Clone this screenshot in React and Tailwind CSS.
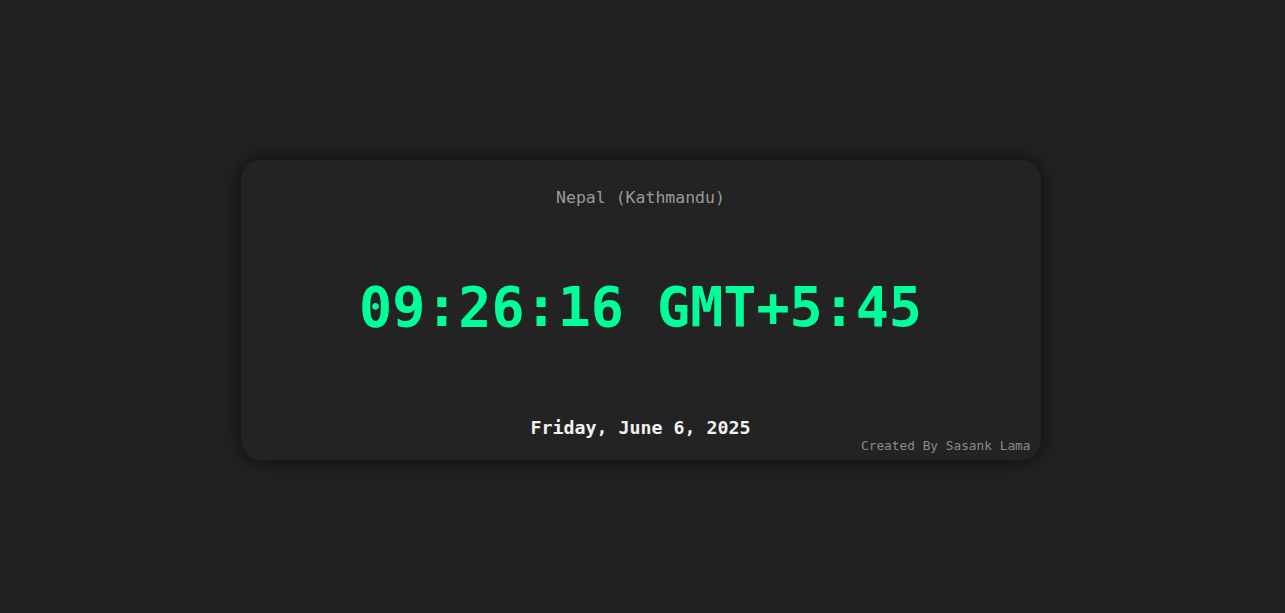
export default function App() {
  return (
    <div className="flex h-screen w-full items-center justify-center bg-[#222222] font-['DejaVu_Sans_Mono',monospace]">
      <div className="relative mr-[4px] mt-[7px] flex h-[300px] w-[800px] flex-col items-center rounded-[20px] bg-[#232323] pt-[26px] shadow-[0_0_22px_rgba(0,0,0,0.65)]">
        <div className="text-[16.5px] leading-6 text-[#9a9a9a]">Nepal (Kathmandu)</div>
        <div className="mt-[70px] text-[55px] font-bold leading-[55px] text-[#00ff99]">09:26:16 GMT+5:45</div>
        <div className="mt-[81px] text-[18.3px] font-bold leading-6 text-[#f2f2f2]">Friday, June 6, 2025</div>
        <div className="absolute bottom-[6px] right-[10px] text-[12.8px] leading-4 text-[#8a8a8a]">Created By Sasank Lama</div>
      </div>
    </div>
  );
}
